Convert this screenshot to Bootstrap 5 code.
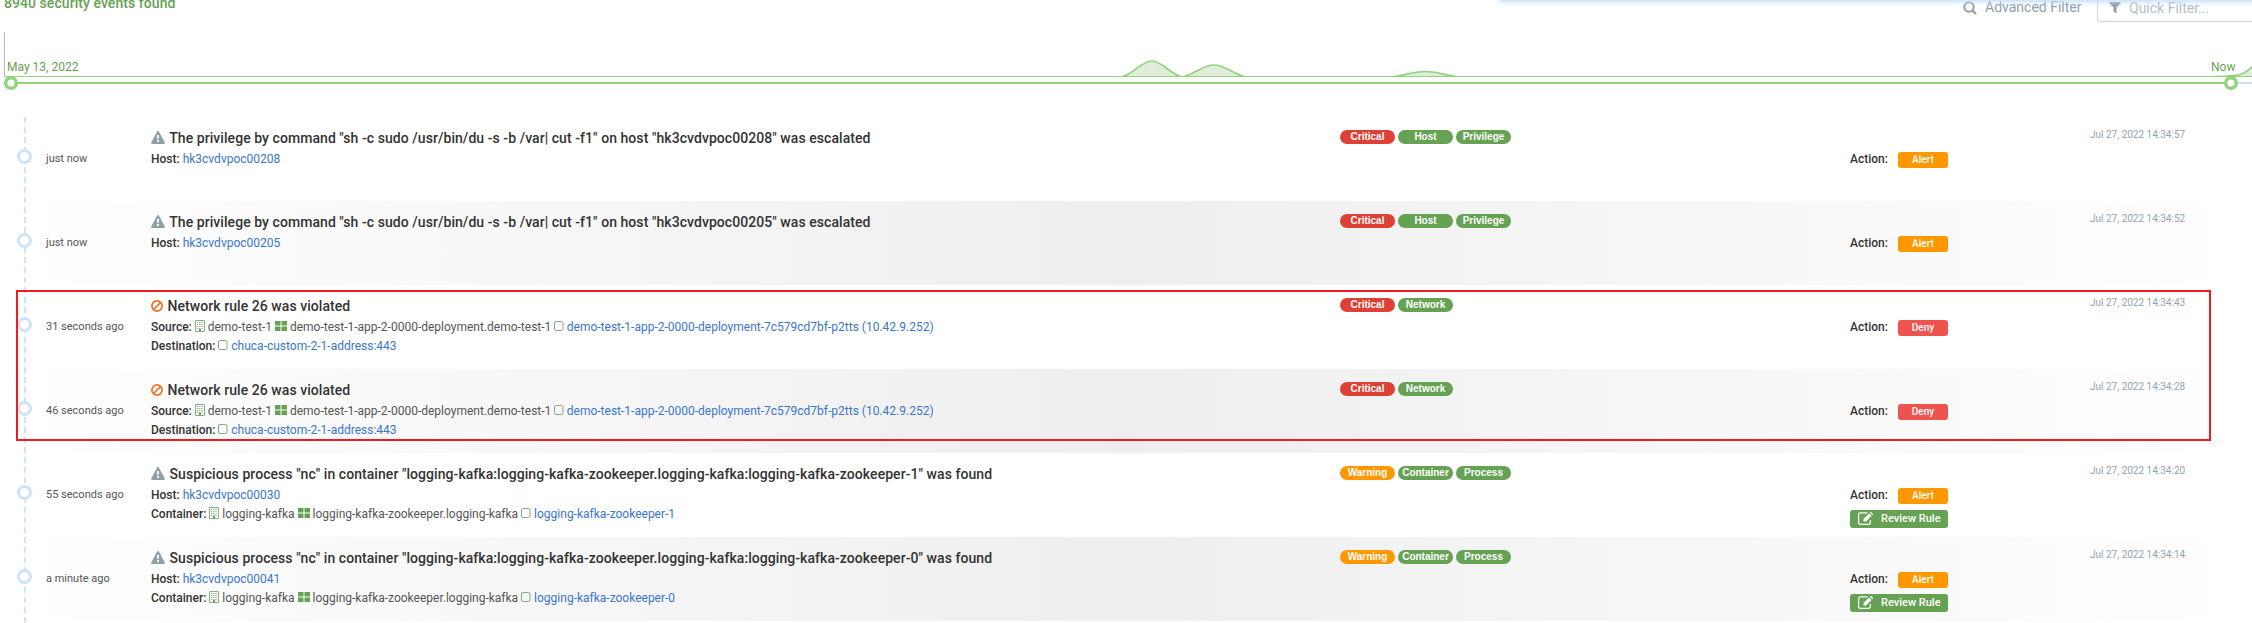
<!DOCTYPE html>
<html lang="en">
<head>
<meta charset="utf-8">
<title>Security events</title>
<link href="https://cdn.jsdelivr.net/npm/bootstrap@5.3.0/dist/css/bootstrap.min.css" rel="stylesheet">
<style>
body{font-family:Roboto,"Liberation Sans",sans-serif;font-size:12px;line-height:19px;color:#555;background:#fff;width:2252px;height:623px;overflow:hidden}
.topline{height:32px;padding-left:4px;position:relative}
.topline .glow{position:absolute;top:-8px;left:1500px;width:800px;height:8px;box-shadow:0 1px 5px 1px #c3dcf8}
.found{font-size:14px;font-weight:500;color:#65a253;line-height:20px;margin-top:-7px;letter-spacing:.06px}
.adv{font-size:14px;color:#90a0ab;line-height:20px;margin-top:-3px;width:134px}
.quick{width:155px;height:28px;margin-top:-6px;border:1px solid #c9d8e4;border-right:0;border-radius:4px 0 0 4px;font-size:14px;color:#b5bcc8;line-height:20px;padding:3px 0 0 11px}
.chart{height:85px}
.feed{position:relative}
.feed>.rail{position:absolute;left:24px;top:0;width:2px;height:506px;background:repeating-linear-gradient(#cfe3f7 0 6px,transparent 6px 10px)}
.ev{display:grid;grid-template-columns:46px 105px 1189px 510px 240px 1fr;height:84px}
.ev:nth-child(even of .ev){background:linear-gradient(90deg,#fff,#eee 50%,#fff)}
.knob{width:15px;height:15px;border:3px solid #cfe3f7;border-radius:50%;background:#fff;margin:32px 0 0 17px;position:relative}
.ago{padding-top:32px;font-size:11px}
.ttl{font-size:14px;font-weight:500;color:#333;line-height:20px;padding-top:11px;letter-spacing:.06px}
.ev svg{vertical-align:baseline}
.ev .ttl svg{vertical-align:-1px;margin-right:1px}
.ev svg.bld{vertical-align:-1px}
.ttl+div{margin-top:2px}
b{font-weight:500;color:#333}
a{color:#3a76cc;text-decoration:none}
.tags{padding-top:13px;gap:3px}
.tg{width:55px;height:14px;border-radius:7px;font:bold 10px/14px "Liberation Sans",Arial,sans-serif;color:#fff;text-align:center}
.red{background:#dd4035}.grn{background:#65a253}.org{background:#ff9800}.deny{background:#ef5350}
.act{padding-top:33px}
.pill{width:50px;height:16px;border-radius:3px;color:#fff;font-size:10px;font-weight:500;line-height:16px;text-align:center;margin:2px 0 0 10px}
.rev{width:98px;height:18px;border-radius:3px;color:#fff;font-weight:500;font-size:11px;line-height:18px;margin-top:5px;padding-left:8px}
.when{font-size:10px;color:#90a4ae;padding-top:8px}
.frame{position:absolute;left:16px;top:173px;width:2195px;height:151px;border:2px solid #ed1c24}
</style>
</head>
<body>
<svg width="0" height="0" class="d-none"><defs>
<symbol id="warn" viewBox="0 0 14 13"><path d="M7 0 Q7.6 0 8 .8 L13.8 11.5 Q14 13 13 13 H1 Q0 13 .2 11.5 L6 .8 Q6.400 0 7 0Z" fill="#90a0a8"/><path d="M6 4h2l-.3 4H6.300z M6 9h2v2H6z" fill="#fff"/></symbol>
<symbol id="ban" viewBox="0 0 12 12"><circle cx="6" cy="6" r="5.100" fill="none" stroke="#f0701c" stroke-width="1.700"/><path d="M2.500 9.500l7-7" stroke="#f0701c" stroke-width="1.700"/></symbol>
<symbol id="bld" viewBox="0 0 10 12"><path d="M.5.5h9v11h-9z" fill="#fff" stroke="#86b37a"/><path d="M2 2.500h6M2 4.500h6M2 6.500h6M2 8.500h6" stroke="#86a584" stroke-dasharray="1.200 1"/><path d="M4 9h2v2.500H4z" fill="#65a253"/></symbol>
<symbol id="grid" viewBox="0 0 12 10"><path d="M0 0h5.500v4.500H0zM6.500 0H12v4.500H6.500zM0 5.500h5.500V10H0zM6.500 5.500H12V10H6.500z" fill="#65a253"/></symbol>
<symbol id="box" viewBox="0 0 10 10"><rect x=".5" y=".5" width="8.500" height="9" rx="1.500" fill="none" stroke="#86a982"/></symbol>
<symbol id="edit" viewBox="0 0 16 13"><path d="M12.300 8v2.500a1.800 1.800 0 0 1-1.800 1.800H2.400A1.800 1.800 0 0 1 .6 10.500V2.700A1.800 1.800 0 0 1 2.400.9h7" fill="none" stroke="#fff" stroke-width="1.200"/><path d="M5.500 9.500V7L11 1.500 13.500 4 8 9.500zM11.700.8l.6-.6q.5-.4 1 0l1.500 1.500q.4.500 0 1l-.6.600z" fill="#fff"/></symbol>
</defs></svg>

<header class="topline d-flex">
  <div class="glow"></div>
  <div class="found flex-grow-1">8940 security events found</div>
  <div class="adv d-flex"><svg class="me-2" width="14" height="14" viewBox="0 0 14 14" style="margin-top:4px"><circle cx="6" cy="6" r="4.700" fill="none" stroke="#90a0ab" stroke-width="2"/><path d="M9.500 9.500l3.500 3.500" stroke="#90a0ab" stroke-width="2.200"/></svg><span>Advanced Filter</span></div>
  <div class="quick d-flex"><svg width="12" height="12" viewBox="0 0 12 12" style="margin:4px 8px 0 0"><path d="M.3 0h11.400q.6.500 0 1.200L7.500 5.500V11.500L4.500 9.500v-4L.300 1.200Q-.2.500.3 0z" fill="#90a0ab"/></svg><span>Quick Filter...</span></div>
</header>

<svg class="chart d-block" width="2252" height="85" viewBox="0 32 2252 85">
  <path d="M4.500 32V76" stroke="#b8b8b8"/>
  <g fill="#e0eddb" stroke="#92d37c" stroke-width="1.700">
    <path d="M1123 76.500C1133 74 1142 61 1152 61S1170 74 1181 76.500"/>
    <path d="M1184 76.500C1195 74 1203 65 1214 65S1232 73 1244 76.500"/>
    <path d="M1394 76.500C1406 75 1413 71.500 1425 71.500S1443 75 1456 76.500"/>
    <path d="M2215 76.500C2242 76 2243 75 2253 66V76.500" />
  </g>
  <path d="M4 76.500H2252" stroke="#92d37c"/>
  <path d="M2231 83H2252" stroke="#d5e1f3" stroke-width="2"/>
  <path d="M11 83H2231" stroke="#92d37c" stroke-width="2"/>
  <g fill="#fff" stroke="#92d37c" stroke-width="3.400"><circle cx="11" cy="83" r="5.300"/><circle cx="2231" cy="83" r="5.300"/></g>
  <g fill="#65a253" font-size="12"><text x="7" y="71">May 13, 2022</text><text x="2211" y="71">Now</text></g>
</svg>

<main class="feed">
  <div class="rail"></div>
  <section class="ev">
    <div><div class="knob"></div></div><div class="ago">just now</div>
    <div><div class="ttl"><svg width="14" height="13"><use href="#warn"/></svg> The privilege by command "sh -c sudo /usr/bin/du -s -b /var| cut -f1" on host "hk3cvdvpoc00208" was escalated</div><div><b>Host:</b> <a href="#">hk3cvdvpoc00208</a></div></div>
    <div class="tags d-flex"><span class="tg red">Critical</span><span class="tg grn">Host</span><span class="tg grn">Privilege</span></div>
    <div class="act"><div class="d-flex"><b>Action:</b><span class="pill org">Alert</span></div></div>
    <div class="when">Jul 27, 2022 14:34:57</div>
  </section>
  <section class="ev">
    <div><div class="knob"></div></div><div class="ago">just now</div>
    <div><div class="ttl"><svg width="14" height="13"><use href="#warn"/></svg> The privilege by command "sh -c sudo /usr/bin/du -s -b /var| cut -f1" on host "hk3cvdvpoc00205" was escalated</div><div><b>Host:</b> <a href="#">hk3cvdvpoc00205</a></div></div>
    <div class="tags d-flex"><span class="tg red">Critical</span><span class="tg grn">Host</span><span class="tg grn">Privilege</span></div>
    <div class="act"><div class="d-flex"><b>Action:</b><span class="pill org">Alert</span></div></div>
    <div class="when">Jul 27, 2022 14:34:52</div>
  </section>
  <section class="ev">
    <div><div class="knob"></div></div><div class="ago">31 seconds ago</div>
    <div><div class="ttl"><svg width="12" height="12"><use href="#ban"/></svg> Network rule 26 was violated</div><div><b>Source:</b> <svg class="bld" width="10" height="12"><use href="#bld"/></svg> demo-test-1 <svg width="12" height="10"><use href="#grid"/></svg> demo-test-1-app-2-0000-deployment.demo-test-1 <svg width="9.500" height="10" viewBox="0 0 9.500 10"><use href="#box" width="10" height="10"/></svg> <a href="#">demo-test-1-app-2-0000-deployment-7c579cd7bf-p2tts (10.42.9.252)</a></div><div><b>Destination:</b> <svg width="10" height="10"><use href="#box"/></svg> <a href="#">chuca-custom-2-1-address:443</a></div></div>
    <div class="tags d-flex"><span class="tg red">Critical</span><span class="tg grn">Network</span></div>
    <div class="act"><div class="d-flex"><b>Action:</b><span class="pill deny">Deny</span></div></div>
    <div class="when">Jul 27, 2022 14:34:43</div>
  </section>
  <section class="ev">
    <div><div class="knob"></div></div><div class="ago">46 seconds ago</div>
    <div><div class="ttl"><svg width="12" height="12"><use href="#ban"/></svg> Network rule 26 was violated</div><div><b>Source:</b> <svg class="bld" width="10" height="12"><use href="#bld"/></svg> demo-test-1 <svg width="12" height="10"><use href="#grid"/></svg> demo-test-1-app-2-0000-deployment.demo-test-1 <svg width="9.500" height="10" viewBox="0 0 9.500 10"><use href="#box" width="10" height="10"/></svg> <a href="#">demo-test-1-app-2-0000-deployment-7c579cd7bf-p2tts (10.42.9.252)</a></div><div><b>Destination:</b> <svg width="10" height="10"><use href="#box"/></svg> <a href="#">chuca-custom-2-1-address:443</a></div></div>
    <div class="tags d-flex"><span class="tg red">Critical</span><span class="tg grn">Network</span></div>
    <div class="act"><div class="d-flex"><b>Action:</b><span class="pill deny">Deny</span></div></div>
    <div class="when">Jul 27, 2022 14:34:28</div>
  </section>
  <section class="ev">
    <div><div class="knob"></div></div><div class="ago">55 seconds ago</div>
    <div><div class="ttl"><svg width="14" height="13"><use href="#warn"/></svg> Suspicious process "nc" in container "logging-kafka:logging-kafka-zookeeper.logging-kafka:logging-kafka-zookeeper-1" was found</div><div><b>Host:</b> <a href="#">hk3cvdvpoc00030</a></div><div><b>Container:</b> <svg class="bld" width="10" height="12"><use href="#bld"/></svg> logging-kafka <svg width="12" height="10"><use href="#grid"/></svg> logging-kafka-zookeeper.logging-kafka <svg width="10" height="10"><use href="#box"/></svg> <a href="#">logging-kafka-zookeeper-1</a></div></div>
    <div class="tags d-flex"><span class="tg org">Warning</span><span class="tg grn">Container</span><span class="tg grn">Process</span></div>
    <div class="act"><div class="d-flex"><b>Action:</b><span class="pill org">Alert</span></div><div class="rev grn d-flex"><svg width="16" height="13" style="margin:2px 7px 0 0"><use href="#edit"/></svg>Review Rule</div></div>
    <div class="when">Jul 27, 2022 14:34:20</div>
  </section>
  <section class="ev">
    <div><div class="knob"></div></div><div class="ago">a minute ago</div>
    <div><div class="ttl"><svg width="14" height="13"><use href="#warn"/></svg> Suspicious process "nc" in container "logging-kafka:logging-kafka-zookeeper.logging-kafka:logging-kafka-zookeeper-0" was found</div><div><b>Host:</b> <a href="#">hk3cvdvpoc00041</a></div><div><b>Container:</b> <svg class="bld" width="10" height="12"><use href="#bld"/></svg> logging-kafka <svg width="12" height="10"><use href="#grid"/></svg> logging-kafka-zookeeper.logging-kafka <svg width="10" height="10"><use href="#box"/></svg> <a href="#">logging-kafka-zookeeper-0</a></div></div>
    <div class="tags d-flex"><span class="tg org">Warning</span><span class="tg grn">Container</span><span class="tg grn">Process</span></div>
    <div class="act"><div class="d-flex"><b>Action:</b><span class="pill org">Alert</span></div><div class="rev grn d-flex"><svg width="16" height="13" style="margin:2px 7px 0 0"><use href="#edit"/></svg>Review Rule</div></div>
    <div class="when">Jul 27, 2022 14:34:14</div>
  </section>
  <div class="frame"></div>
</main>
<script src="https://cdn.jsdelivr.net/npm/bootstrap@5.3.0/dist/js/bootstrap.bundle.min.js"></script>
</body>
</html>
